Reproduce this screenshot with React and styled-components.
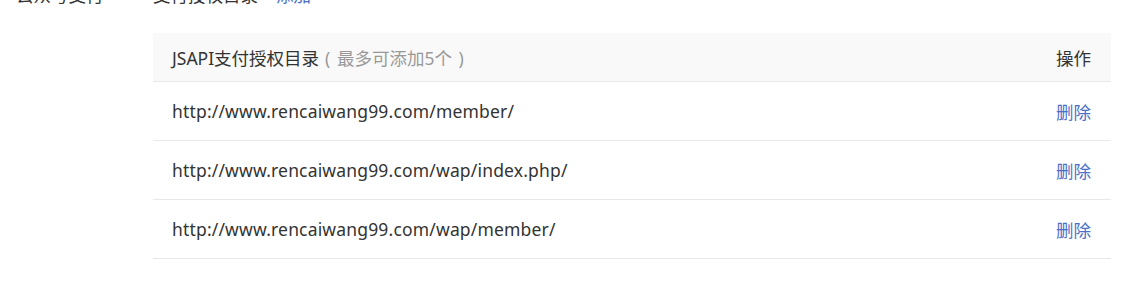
import React from 'react'
import styled, { createGlobalStyle } from 'styled-components';

const GlobalStyle = createGlobalStyle`
  body {
    margin: 0;
    background: #fff;
    font-family: "Noto Sans", "Noto Sans CJK SC", sans-serif;
    color: #333;
  }
`;

export default function App() {
    const dirs = [
        `http://www.rencaiwang99.com/member/`,
        `http://www.rencaiwang99.com/wap/index.php/`,
        `http://www.rencaiwang99.com/wap/member/`,
    ]

    return (
        <>
            <GlobalStyle />
            <Page>
                <FormRow>
                    <Label>公众号支付</Label>
                    <Field>
                        支付授权目录
                        <Link>添加</Link>
                    </Field>
                </FormRow>
                <Table>
                    <HeadRow>
                        <Cell>
                            JSAPI支付授权目录<Hint>( 最多可添加5个 )</Hint>
                        </Cell>
                        <Action>操作</Action>
                    </HeadRow>
                    {
                        dirs.map((url) => {
                            return (
                                <Row key={url}>
                                    <Url>{url}</Url>
                                    <Action><Link>删除</Link></Action>
                                </Row>
                            )
                        })
                    }
                </Table>
            </Page>
        </>
    )
}

const Page = styled.div`
  margin-top: -17px;
  padding: 0 32px 0 16px;
  font-size: 17.5px;
`;

const FormRow = styled.div`
  display: flex;
  line-height: 24px;
  height: 24px;
`;

const Label = styled.div`
  width: 137px;
  flex: none;
`;

const Field = styled.div`
  display: flex;
  gap: 18px;
`;

const Link = styled.a`
  color: #4b6fc8;
  cursor: pointer;
`;

const Table = styled.div`
  margin: 26px 0 0 137px;
`;

const Row = styled.div`
  display: flex;
  justify-content: space-between;
  align-items: center;
  height: 58px;
  padding: 0 20px 0 19px;
  border-bottom: 1px solid #e8e8e8;
`;

const HeadRow = styled(Row)`
  height: 48px;
  background: #f9f9f9;
`;

const Cell = styled.div`
  color: #333;
`;

const Url = styled(Cell)`
  letter-spacing: 0.17px;
`;

const Hint = styled.span`
  color: #999;
  margin-left: 6px;
  word-spacing: 2px;
`;

const Action = styled.div`
  color: #333;
`;
